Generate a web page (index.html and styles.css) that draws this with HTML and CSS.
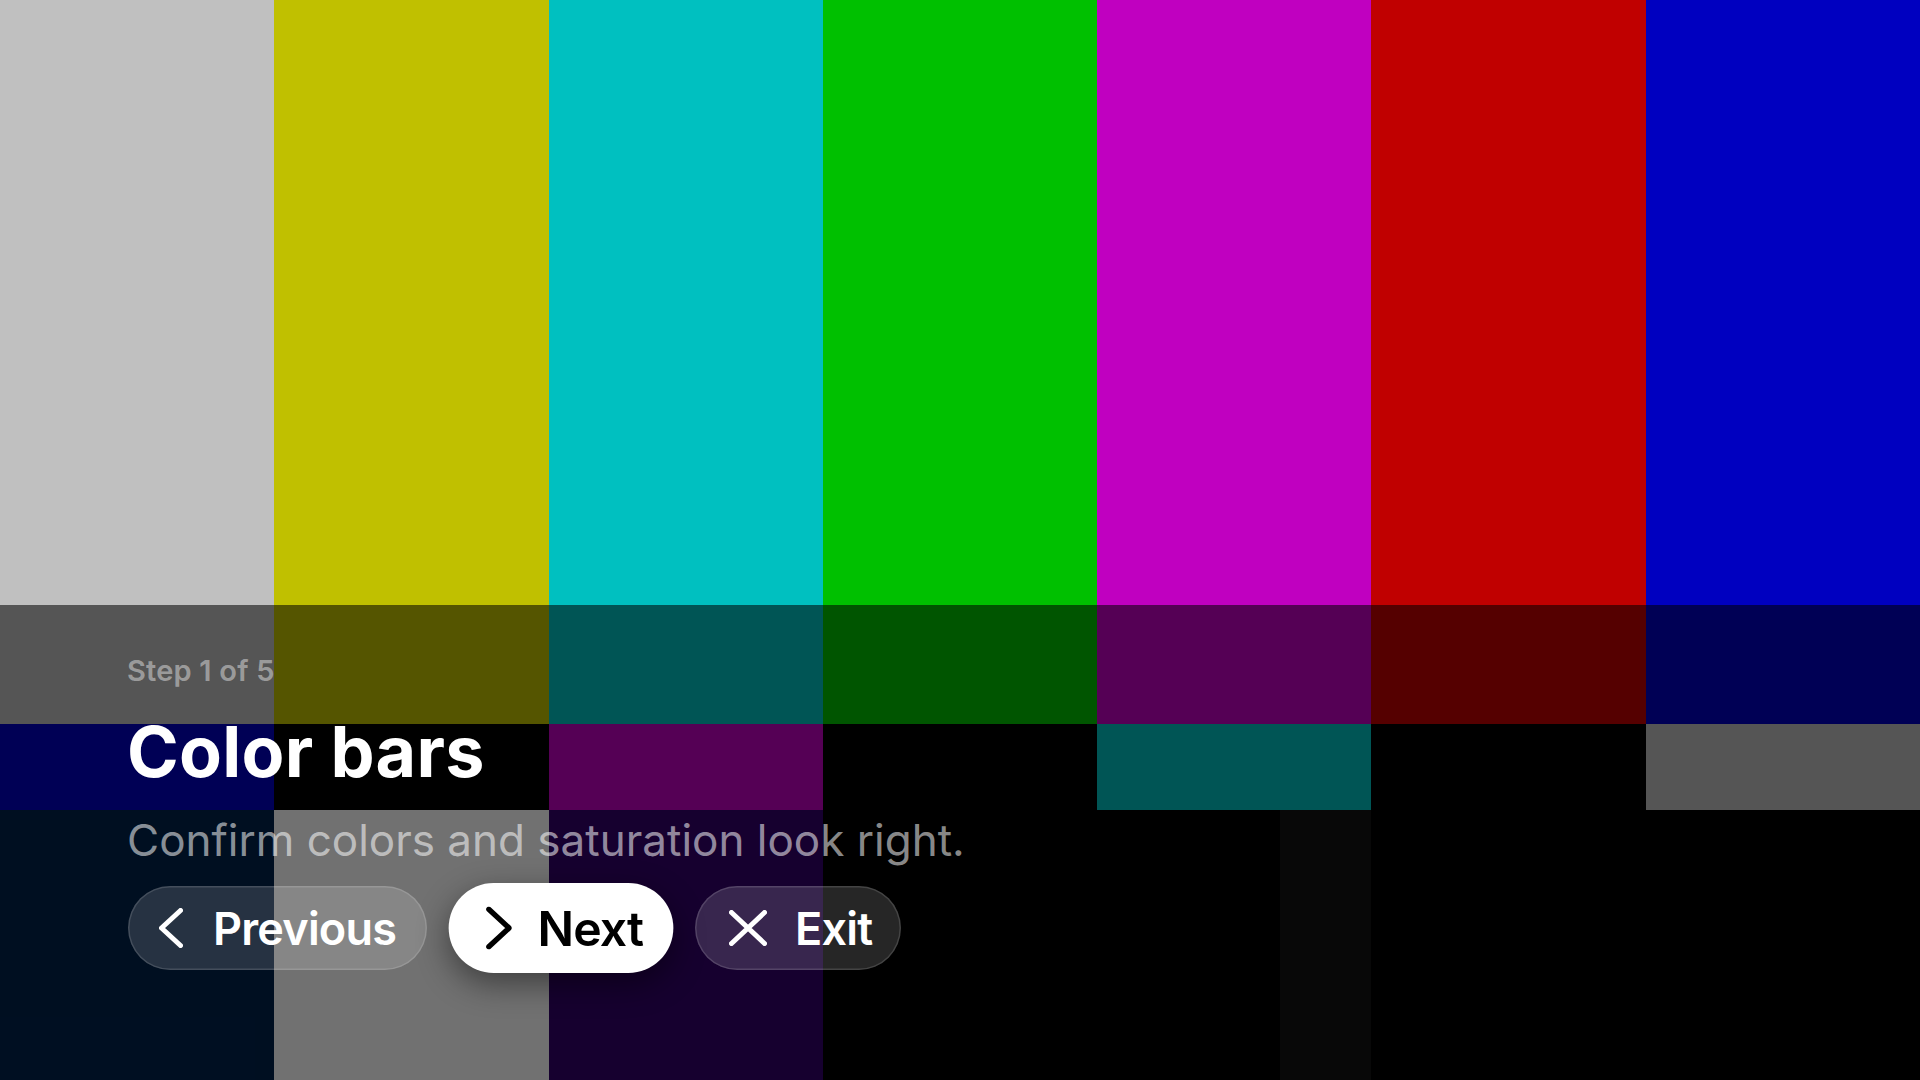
FILE: index.html
```html
<!DOCTYPE html>
<html lang="en">
<head>
<meta charset="utf-8">
<title>Color bars</title>
<link rel="stylesheet" href="styles.css">
</head>
<body>
<div class="screen">
  <div class="bars">
    <div class="row row-top">
      <div class="bar c-grey"></div>
      <div class="bar c-yellow"></div>
      <div class="bar c-cyan"></div>
      <div class="bar c-green"></div>
      <div class="bar c-magenta"></div>
      <div class="bar c-red"></div>
      <div class="bar c-blue"></div>
    </div>
    <div class="row row-mid">
      <div class="bar c-blue"></div>
      <div class="bar c-black"></div>
      <div class="bar c-magenta"></div>
      <div class="bar c-black"></div>
      <div class="bar c-cyan"></div>
      <div class="bar c-black"></div>
      <div class="bar c-grey"></div>
    </div>
    <div class="row row-bot">
      <div class="bar c-minus-i"></div>
      <div class="bar c-white"></div>
      <div class="bar c-plus-q"></div>
      <div class="bar c-black"></div>
      <div class="bar pluge">
        <div class="pl c-superblack"></div>
        <div class="pl c-black"></div>
        <div class="pl c-plus4"></div>
      </div>
      <div class="bar c-black"></div>
      <div class="bar c-black"></div>
    </div>
  </div>
  <div class="scrim"></div>
  <div class="panel">
    <p class="step">Step 1 of 5</p>
    <h1 class="title">Color bars</h1>
    <p class="desc">Confirm colors and saturation look right.</p>
    <div class="actions">
      <button class="btn btn-prev" type="button">
        <svg class="ico ico-chev" viewBox="0 0 24 40" width="24" height="40"><path d="M21.5 2.5 L2.5 20 L21.5 37.5"/></svg>
        <span>Previous</span>
      </button>
      <button class="btn btn-next" type="button">
        <svg class="ico ico-chev" viewBox="0 0 24 40" width="24" height="40"><path d="M2.5 2.5 L21.5 20 L2.5 37.5"/></svg>
        <span>Next</span>
      </button>
      <button class="btn btn-exit" type="button">
        <svg class="ico ico-x" viewBox="0 0 38 36" width="38" height="36"><path d="M2.5 2.5 L35.5 33.5 M35.5 2.5 L2.5 33.5"/></svg>
        <span>Exit</span>
      </button>
    </div>
  </div>
</div>
</body>
</html>
```

FILE: styles.css
```css
* { box-sizing: border-box; }
html, body {
  margin: 0;
  padding: 0;
  width: 1920px;
  height: 1080px;
  overflow: hidden;
  background: #000;
  font-family: Inter, "Noto Sans", "Liberation Sans", sans-serif;
}
.screen {
  position: relative;
  width: 1920px;
  height: 1080px;
}
.bars {
  display: flex;
  flex-direction: column;
  width: 100%;
  height: 100%;
}
.row { display: flex; }
.row-top { height: 67%; }
.row-mid { height: 8%; }
.row-bot { flex: 1; }
.bar { flex: 1; }
.pluge { display: flex; }
.pl { flex: 1; }

.c-grey { background: #c0c0c0; }
.c-yellow { background: #c0c000; }
.c-cyan { background: #00c0c0; }
.c-green { background: #00c000; }
.c-magenta { background: #c000c0; }
.c-red { background: #c00000; }
.c-blue { background: #0000c0; }
.c-black { background: #000; }
.c-white { background: #ffffff; }
.c-minus-i { background: #00224c; }
.c-plus-q { background: #32006a; }
.c-superblack { background: #000; }
.c-plus4 { background: #141414; }

.scrim {
  position: absolute;
  top: 605px;
  left: 0;
  right: 0;
  bottom: 0;
  background: rgba(0, 0, 0, 0.555);
}
.panel {
  position: absolute;
  top: 605px;
  left: 0;
  right: 0;
  padding: 48px 0 0 127px;
  display: flex;
  flex-direction: column;
  align-items: flex-start;
}
.step {
  margin: 0;
  font-size: 29px;
  line-height: 36px;
  font-weight: 600;
  letter-spacing: 0.2px;
  color: rgba(255, 255, 255, 0.43);
}
.title {
  margin: 21px 0 0;
  font-size: 70px;
  line-height: 84px;
  font-weight: 700;
  letter-spacing: 0.3px;
  color: #fff;
}
.desc {
  margin: 19px 0 0;
  font-size: 44px;
  line-height: 54px;
  font-weight: 400;
  letter-spacing: 0;
  color: rgba(255, 255, 255, 0.55);
}
.actions {
  margin: 19px 0 0 1px;
  display: flex;
  gap: 29px;
  align-items: center;
}
.btn {
  display: inline-flex;
  align-items: center;
  height: 84px;
  border: 0;
  border-radius: 42px;
  background: rgba(255, 255, 255, 0.15);
  box-shadow: inset 0 0 0 1.5px rgba(255, 255, 255, 0.14);
  color: #fff;
  font-family: inherit;
  font-size: 45px;
  font-weight: 600;
  letter-spacing: -0.8px;
  line-height: 1;
  cursor: pointer;
}
.btn-prev { padding: 0 31px 0 31px; gap: 30px; }
.btn-exit { padding: 0 29px 0 34px; gap: 28px; }
.btn-next {
  padding: 0 28px 0 35px;
  gap: 24px;
  background: #fff;
  color: #000;
  box-shadow: 0 10px 30px rgba(0, 0, 0, 0.45);
  transform: scale(1.07);
}
.ico { display: block; flex: none; }
.ico path {
  fill: none;
  stroke: currentColor;
  stroke-width: 5;
  stroke-linecap: round;
  stroke-linejoin: round;
}
```
